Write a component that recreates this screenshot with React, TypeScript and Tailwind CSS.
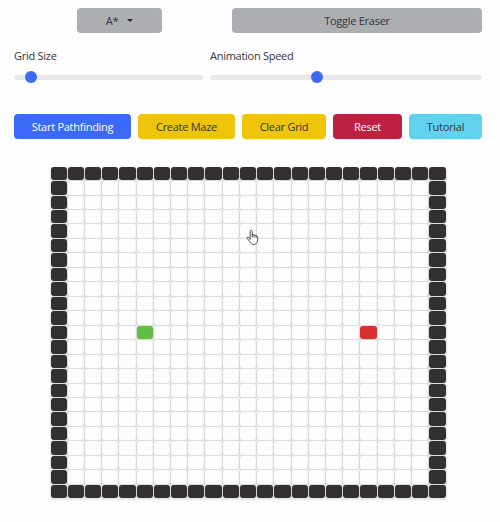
import React from "react";

const SIZE = 23;
const START = { row: 11, col: 5 };
const TARGET = { row: 11, col: 18 };

function cellClass(row: number, col: number) {
  if (row === START.row && col === START.col) return "bg-[#63bb49]";
  if (row === TARGET.row && col === TARGET.col) return "bg-[#d63030]";
  if (row === 0 || col === 0 || row === SIZE - 1 || col === SIZE - 1) return "bg-[#323032]";
  return "bg-[#fdfcfe]";
}

function Slider({ label, width, thumb }: { label: string; width: string; thumb: string }) {
  return (
    <div className={width}>
      <div className="h-[15px] leading-[15px] whitespace-nowrap">{label}</div>
      <div className="mt-[8px] flex h-[12px] items-center">
        <div className="flex h-[5px] w-full items-center rounded-full bg-[#e9e8eb]">
          <div className={`size-[11.5px] shrink-0 rounded-full bg-[#3d69f8] ${thumb}`} />
        </div>
      </div>
    </div>
  );
}

function Button({ className, children }: { className: string; children: React.ReactNode }) {
  return (
    <button className={`flex h-[25px] shrink-0 items-center justify-center rounded-[4px] pt-px whitespace-nowrap ${className}`}>
      {children}
    </button>
  );
}

function HandCursor() {
  return (
    <svg className="absolute top-[229px] left-[246px]" width="13" height="17" viewBox="0 0 14 17" fill="#fff" stroke="#444" strokeWidth="1" strokeLinejoin="round" strokeLinecap="round">
      <path d="M4.5 10.5V2Q4.5.6 5.6.6T6.7 2V6Q7 5.2 7.9 5.4T8.8 6.5Q9.3 5.7 10.1 6T10.9 7.1Q11.8 6.3 12.5 7.5V11Q12.5 14 10.7 15.4Q8.4 16.8 6 15.4Q4.6 14.4 3.6 12.4L1.2 9.3Q.9 8 2.2 8Q3.2 8.2 4.5 10" />
      <path d="M6.7 6V8M8.8 6.5V8M10.9 7V8.5" fill="none" />
    </svg>
  );
}

export default function App() {
  return (
    <div className="relative h-[522px] w-[500px] overflow-hidden bg-[#fefdff] font-['Open_Sans','Noto_Sans',sans-serif] text-[11px] tracking-[-0.27px] text-[#34343a]">
      <div className="flex pt-[8px] pl-[77px]">
        <Button className="w-[85px] bg-[#adaeb2]">
          <span className="flex items-center gap-[9px]">
            A*
            <span className="-mt-px border-x-[3px] border-t-[3px] border-x-transparent border-t-[#29292d]" />
          </span>
        </Button>
        <Button className="ml-[70px] w-[250px] bg-[#adaeb2]">Toggle Eraser</Button>
      </div>
      <div className="mt-[15px] flex gap-[7px] pl-[14px]">
        <Slider label="Grid Size" width="w-[189px]" thumb="ml-[11px]" />
        <Slider label="Animation Speed" width="w-[272px]" thumb="ml-[101px]" />
      </div>
      <div className="mt-[31px] flex gap-[7px] pl-[14px]">
        <Button className="w-[117px] bg-[#3d69f8] text-white">Start Pathfinding</Button>
        <Button className="w-[97px] bg-[#eec50b]">Create Maze</Button>
        <Button className="w-[84px] bg-[#eec50b]">Clear Grid</Button>
        <Button className="w-[69px] bg-[#bd2040] text-white">Reset</Button>
        <Button className="w-[73px] bg-[#61d2ee]">Tutorial</Button>
      </div>
      <div className="mt-[27.6px] ml-[50.5px] grid h-[332.6px] w-[396px] grid-cols-[repeat(23,minmax(0,1fr))] grid-rows-[repeat(23,minmax(0,1fr))]">
        {Array.from({ length: SIZE * SIZE }, (_, i) => (
          <div key={i} className="pr-px pb-px">
            <div className={`h-full rounded-[3px] shadow-[0_1px_2px_0.5px_#0000001c] ${cellClass(Math.floor(i / SIZE), i % SIZE)}`} />
          </div>
        ))}
      </div>
      <HandCursor />
    </div>
  );
}
